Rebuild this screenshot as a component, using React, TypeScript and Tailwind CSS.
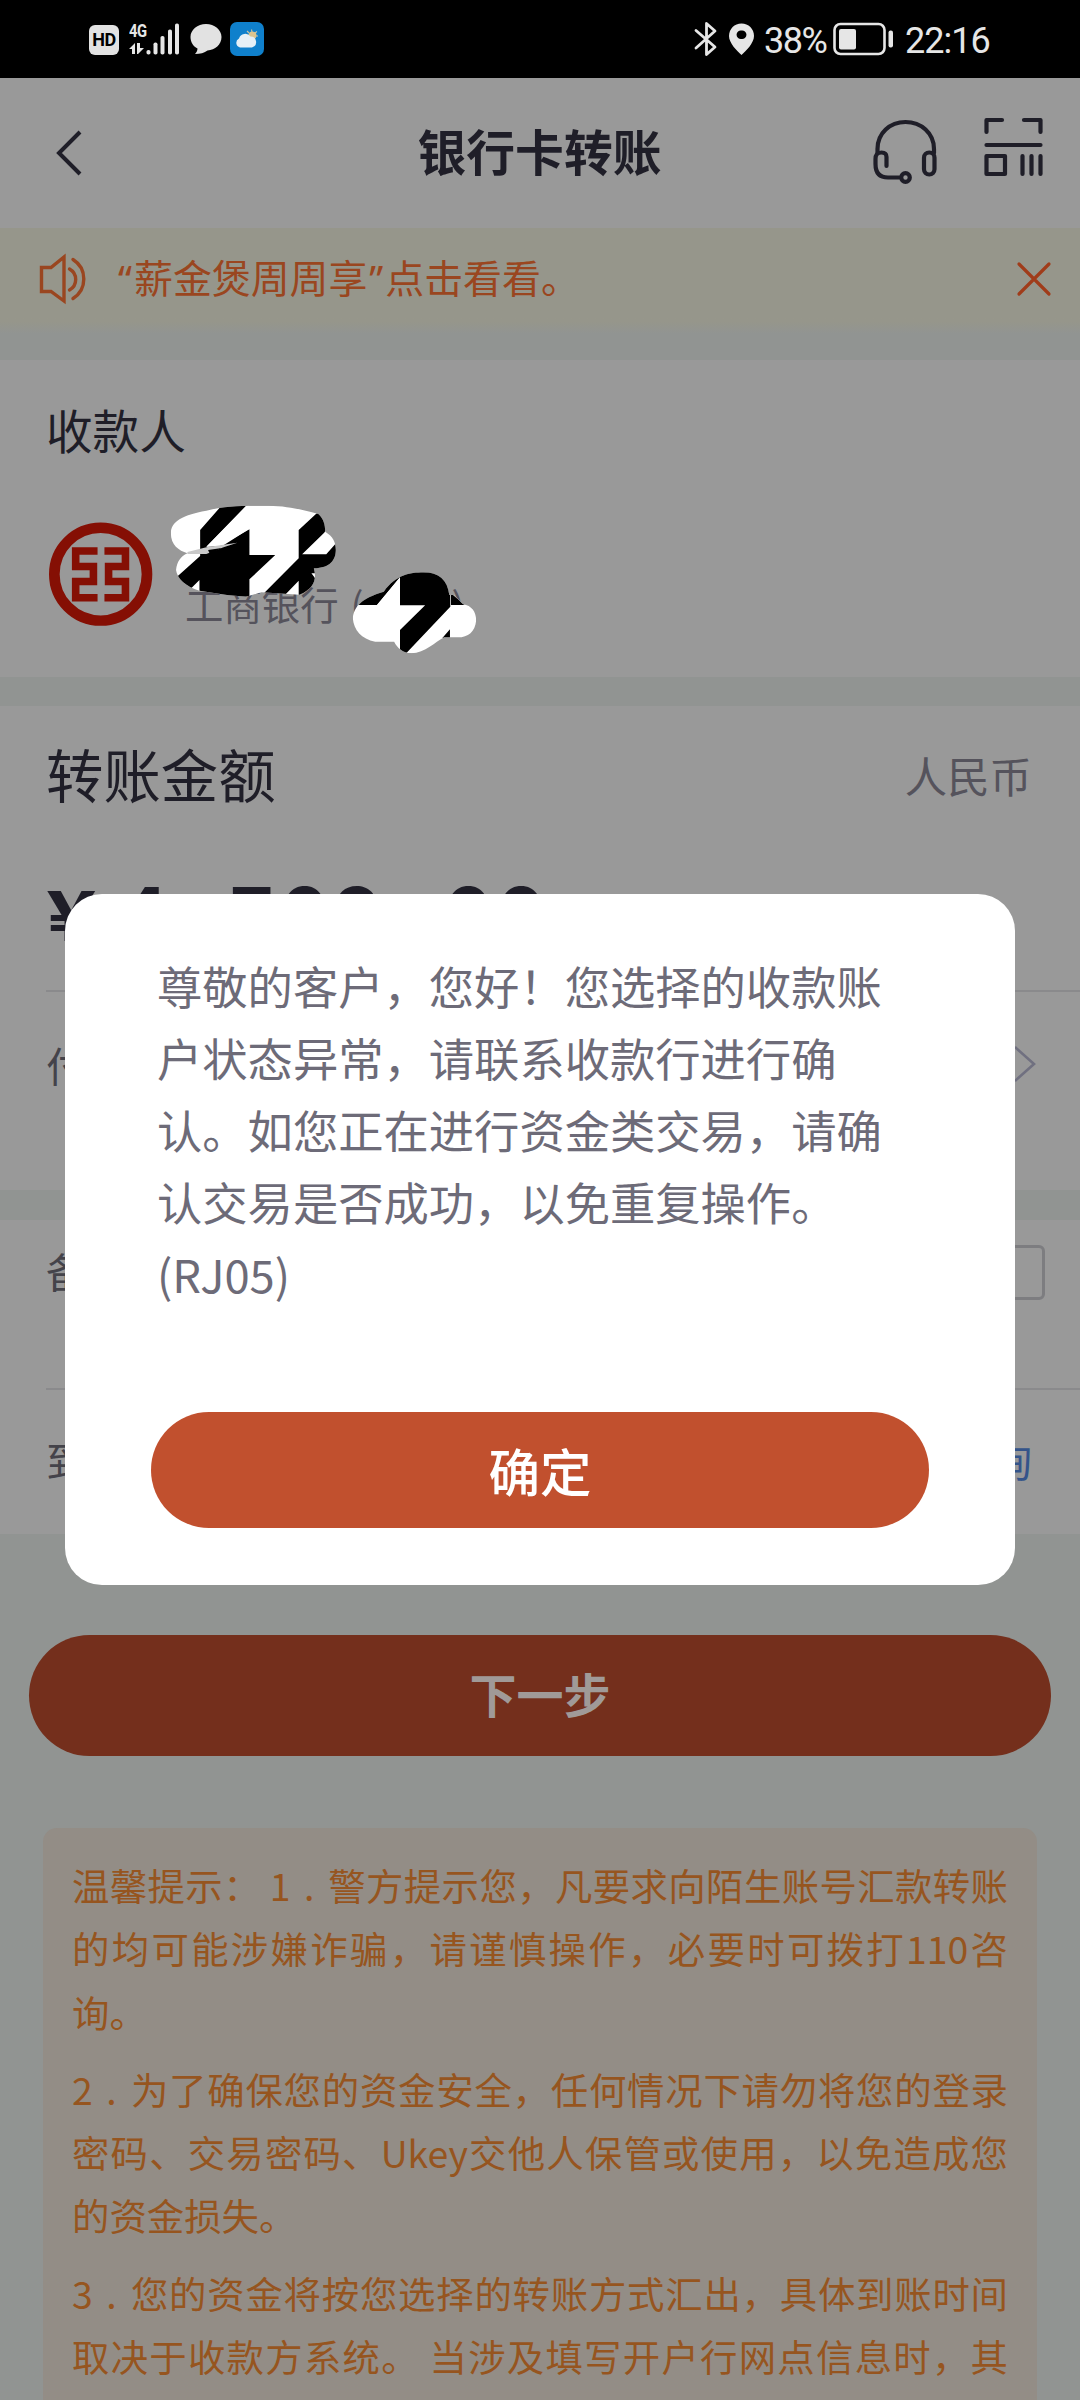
import type { ReactNode } from "react";

const MESSAGE = [
  "尊敬的客户，您好！您选择的收款账",
  "户状态异常，请联系收款行进行确",
  "认。如您正在进行资金类交易，请确",
  "认交易是否成功，以免重复操作。",
  "(RJ05)",
];

export default function App() {
  return (
    <div className="relative w-[1080px] h-[2400px] overflow-hidden bg-[#919492] font-['Noto_Sans_CJK_SC',sans-serif] text-[#1f1e28]">
      <StatusBar />
      <Header />
      <Notice />
      <Payee />
      <Amount />
      <Remark />

      <div className="mt-[101px] ml-[29px] w-[1022px] h-[121px] rounded-full bg-[#742f1c] flex items-center justify-center">
        <span className="text-[47px] leading-none font-bold text-[#a09a98] -mt-[6px]">下一步</span>
      </div>

      <Tips />
      <Dialog />
    </div>
  );
}

function StatusBar() {
  return (
    <div className="h-[78px] bg-black flex items-center justify-between pl-[89px] pr-[89px] text-[#e6e6e6]">
      <div className="flex items-center">
        <div className="mt-[2px] w-[30px] h-[30px] rounded-[6px] bg-[#e2e2e2] text-black flex items-center justify-center font-['Roboto',sans-serif] font-bold text-[18px] leading-none tracking-[-0.5px]">
          HD
        </div>
        <div className="ml-[10px] w-[52px] h-[34px] relative">
          <span className="absolute left-0 top-[1px] font-['Roboto',sans-serif] font-bold text-[18px] leading-[15px] tracking-[-0.5px] scale-x-[0.82] origin-left">
            4G
          </span>
          <svg className="absolute left-0 top-0" width="52" height="34" viewBox="0 0 52 34" fill="#e6e6e6">
            <path d="M0 27 L6 21 V32 H3 V27 Z M8 21 H11 V26 H15 L9 32 H8 Z" />
            <rect x="17.5" y="28" width="4" height="4.5" rx="1.8" />
            <rect x="24.5" y="20.5" width="4" height="12" rx="1.8" />
            <rect x="31.5" y="14" width="4" height="18.5" rx="1.8" />
            <rect x="39" y="7.5" width="4" height="25" rx="1.8" />
            <rect x="46" y="1.5" width="4" height="31" rx="1.8" />
          </svg>
        </div>
        <svg className="ml-[9px]" width="32" height="32" viewBox="0 0 32 32" fill="#e2e2e2">
          <path d="M16 1 C24.500 1 31.500 6.800 31.500 14 C31.500 21.500 25 27 17.500 27.500 C14.500 30 10 31 5 31 C6.500 29.500 7.500 27.500 7.500 25.500 C3 23.200 0.500 19 0.500 14 C0.500 6.800 7.500 1 16 1 Z" />
        </svg>
        <svg className="ml-[8px]" width="34" height="34" viewBox="0 0 34 34">
          <rect width="34" height="34" rx="7" fill="#0f80cc" />
          <path d="M17 9 L19 11 M21.500 7.500 L22 10 M27 9.500 L25 11 M28 14 L25.500 14" stroke="#c9c3a5" strokeWidth="1.200" />
          <circle cx="22.500" cy="13.500" r="4" fill="#dcc48e" />
          <path d="M10 25.500 A4.800 4.800 0 0 1 9 16.500 A6.500 6.500 0 0 1 20.500 14.500 A5.600 5.600 0 0 1 22 25.500 Z" fill="#e6f0f7" />
        </svg>
      </div>

      <div className="flex items-center font-['Roboto',sans-serif]">
        <svg width="24" height="36" viewBox="0 0 24 36" fill="none" stroke="#e6e6e6" strokeWidth="2.800" strokeLinejoin="round" strokeLinecap="round">
          <path d="M2 9.500 L21 26 L12.500 33.500 V2.500 L21 10 L2 27" />
        </svg>
        <svg className="ml-[10px]" width="27" height="34" viewBox="0 0 27 34">
          <path
            d="M13.500 1.500 C20.500 1.500 26 6.800 26 14 C26 21 18 29 13.500 33 C9 29 1 21 1 14 C1 6.800 6.500 1.500 13.500 1.500 Z M13.500 8.500 A4.300 4.300 0 1 0 13.500 17 A4.300 4.300 0 1 0 13.500 8.500 Z"
            fill="#e6e6e6"
            fillRule="evenodd"
          />
        </svg>
        <span className="ml-[9px] w-[66px] text-[36px] leading-none mt-[3px] tracking-[-1.5px] whitespace-nowrap">38%</span>
        <svg className="ml-[3px]" width="61" height="34" viewBox="0 0 61 34">
          <rect x="1.500" y="2" width="50" height="30" rx="6" fill="none" stroke="#e6e6e6" strokeWidth="2.600" />
          <rect x="6" y="7" width="17" height="20.500" rx="2" fill="#e6e6e6" />
          <rect x="55.500" y="8.500" width="4.500" height="17" rx="2" fill="#e6e6e6" />
        </svg>
        <span className="ml-[11px] w-[86px] text-[36px] leading-none mt-[3px] tracking-[-1px] whitespace-nowrap">22:16</span>
      </div>
    </div>
  );
}

function Header() {
  return (
    <div className="relative h-[150px] bg-[#999999] flex items-center justify-center">
      <svg className="absolute left-[54px] top-[50px]" width="32" height="50" viewBox="0 0 32 50" fill="none" stroke="#1f1e28" strokeWidth="4">
        <path d="M26 4 L5 25 L26 46" />
      </svg>
      <h1 className="text-[48.8px] leading-none font-bold -mt-[6px] -ml-[1px]">银行卡转账</h1>
      <div className="absolute left-[871px] top-[38px] flex">
        <svg width="70" height="72" viewBox="0 0 70 72" fill="none" stroke="#1f1e28" strokeWidth="4.200" strokeLinecap="round" strokeLinejoin="round">
          <path d="M6.500 37 V33 C6.500 17 19 6 34.500 6 C50 6 63 17 63 33 V37" />
          <path d="M15.500 50 V41 C15.500 37.500 13.500 36.500 10.500 36.500 C6 36.500 4.500 39 4.500 43 V48 C4.500 57 9 61.500 17 61.500 H28" />
          <rect x="53" y="36.500" width="10.500" height="22" rx="5.200" />
          <circle cx="34.500" cy="61.500" r="4.300" />
        </svg>
        <svg className="ml-[41px]" width="64" height="64" viewBox="0 0 64 64" fill="none" stroke="#1f1e28" strokeWidth="4.200" strokeLinecap="round" strokeLinejoin="round">
          <path d="M4.500 16 V4 H20 M42 4 H58.500 V16 M4.500 29 H58.500" />
          <rect x="4.500" y="40" width="18.500" height="18" />
          <path d="M40.500 40 V58 M49.500 40 V58 M58.500 40 V58" />
        </svg>
      </div>
    </div>
  );
}

function Notice() {
  return (
    <div className="h-[106px] bg-linear-to-b from-[#96968b] from-88% to-[#919492] flex items-start pt-[20px] pl-[38px] text-[#9a4620]">
      <svg className="mt-[4px]" width="52" height="54" viewBox="0 0 52 54" fill="none" stroke="#9a4620" strokeWidth="3.400" strokeLinecap="round">
        <path d="M3.500 15.500 H13 L26 5 V49 L13 39.500 H3.500 Z" />
        <path d="M31.500 17 A12 12 0 0 1 31.500 38 M35 7.500 A23 23 0 0 1 35 46.500" />
      </svg>
      <p className="ml-[26px] text-[38.9px] leading-[56px] whitespace-nowrap">
        <Quote>“</Quote>薪金煲周周享<Quote>”</Quote>点击看看。
      </p>
      <svg className="ml-auto mr-[28px] mt-[12px]" width="36" height="38" viewBox="0 0 36 38" stroke="#a03c1a" strokeWidth="3.200" strokeLinecap="round">
        <path d="M3 4 L33 34 M33 4 L3 34" />
      </svg>
    </div>
  );
}

function Quote({ children }: { children: ReactNode }) {
  return <span className="inline-block w-[18px] text-center font-['Noto_Sans',sans-serif]">{children}</span>;
}

function Payee() {
  return (
    <div className="relative mt-[26px] h-[317px] bg-[#999999] pl-[46px] pt-[44px]">
      <h2 className="text-[46.6px] leading-[50px]">收款人</h2>
      <div className="flex mt-[68px]">
        <svg className="ml-[3px]" width="104" height="105" viewBox="143 547 302 312" preserveAspectRatio="none" fill="none" stroke="#850f04">
          <ellipse cx="293" cy="702" rx="134.500" ry="138" strokeWidth="31" />
          <path d="M284 633 H220.500 V679 H272 V724 H220.500 V772 H284" strokeWidth="22" />
          <path d="M304 633 H365 V679 H316 V724 H365 V772 H304" strokeWidth="22" />
        </svg>
        <div className="ml-[32px] mt-[57px] flex text-[38.4px] leading-[48px] text-[#55535c]">
          <span>工商银行</span>
          <span className="ml-[12px]">(</span>
          <span className="ml-[88px]">)</span>
        </div>
      </div>
      <Scribbles />
    </div>
  );
}

// hand-drawn marker blobs hiding the payee's name and card tail
function Scribbles() {
  return (
    <svg className="absolute left-[165px] top-[140px]" width="317" height="160" viewBox="480 480 920 480" preserveAspectRatio="none">
      <clipPath id="name-blob">
        <path d="M497 580 C497 545 530 525 600 512 C650 498 700 497 780 497 C840 498 880 510 925 522 C940 535 945 555 945 575 C968 590 975 605 976 630 C975 660 960 684 912 685 C920 715 915 745 870 764 L760 757 L715 770 L660 765 L580 752 C540 740 515 715 512 690 C515 665 525 650 545 640 C520 632 497 615 497 580 Z" />
      </clipPath>
      <clipPath id="card-blob">
        <path d="M1025 835 C1028 800 1050 775 1115 755 C1150 705 1190 697 1230 697 C1275 697 1300 720 1305 765 L1318 765 L1345 793 C1370 797 1383 815 1383 842 C1380 875 1360 892 1330 892 H1290 C1265 905 1235 940 1195 940 C1170 938 1155 925 1145 905 H1090 C1050 898 1028 870 1025 835 Z" />
      </clipPath>
      <g clipPath="url(#name-blob)">
        <rect x="480" y="480" width="520" height="300" fill="#fff" />
        <path d="M650 490 H722 L600 620 L640 618 L725 568 V645 H800 L725 718 V780 H580 V720 L556 745 L510 715 L582 648 V570 Z" />
        <path d="M600 620 L725 490 V566 L650 616 Z" fill="#fff" />
        <path d="M600 622 L690 608 L650 622 L600 642 H545 V636 Z" fill="#c9c9c9" />
        <path d="M605 630 L645 624 L610 642 Z" />
        <path d="M922 518 L960 550 L942 578 L878 643 H948 L980 605 V700 H905 L930 735 L868 775 V722 L828 765 H762 L868 655 V570 Z" />
      </g>
      <g clipPath="url(#card-blob)">
        <rect x="1020" y="690" width="370" height="255" fill="#fff" />
        <path d="M1162 690 H1308 V800 L1180 940 H1162 V870 L1235 796 H1162 V712 L1095 795 H1035 L1060 760 Z" />
        <path d="M1162 712 V796 H1095 Z" fill="#fff" />
        <path d="M1285 894 L1307 868 V894 Z M1310 760 L1350 795 H1310 Z" />
      </g>
    </svg>
  );
}

function Amount() {
  return (
    <div className="mt-[29px] h-[484px] bg-[#999999] pl-[46px]">
      <div className="flex items-center justify-between h-[136px] pr-[48px]">
        <h2 className="text-[57.4px] leading-none">转账金额</h2>
        <span className="text-[42.4px] leading-none text-[#55535c] mt-[3px]">人民币</span>
      </div>
      <div className="h-[148px] pt-[27px] flex items-baseline font-['Inter',sans-serif] font-bold tabular-nums leading-[90px] whitespace-nowrap">
        <span className="text-[69px] w-[74px] scale-x-[1.28] origin-left">¥</span>
        <span className="text-[74px] tracking-[5px]">
          4<span className="inline-block w-[55px] text-center">,</span>709
          <span className="inline-block w-[58px] text-center">.</span>00
        </span>
      </div>
      <div className="h-[149px] border-t-2 border-[#8a8a8c] flex items-center justify-between pr-[43px] pb-[3px] text-[41px] leading-none text-[#44434a]">
        <span>付款卡</span>
        <svg width="24" height="40" viewBox="0 0 24 40" fill="none" stroke="#707080" strokeWidth="2.600">
          <path d="M2 3 L21 20 L2 37" />
        </svg>
      </div>
    </div>
  );
}

function Remark() {
  return (
    <div className="mt-[30px] h-[314px] bg-[#999999] pl-[46px] text-[41px] leading-none text-[#44434a]">
      <div className="h-[168px] flex items-start justify-between pr-[35px] pt-[25px]">
        <span className="mt-[5px]">备注</span>
        <div className="w-[760px] h-[55px] rounded-md border-3 border-[#7d7d80]" />
      </div>
      <div className="h-[146px] border-t-2 border-[#8a8a8c] flex items-start justify-between pt-[49px] pr-[48px]">
        <span>到账时间</span>
        <span className="text-[#34548a]">查询</span>
      </div>
    </div>
  );
}

function TipLine({ children }: { children: ReactNode }) {
  return <div className="whitespace-nowrap text-justify [text-align-last:justify]">{children}</div>;
}

function Dot() {
  return <span className="inline-block w-[1em] text-center [text-align-last:center]">.</span>;
}

function Tips() {
  return (
    <div className="mt-[72px] ml-[43px] w-[994px] h-[640px] rounded-[14px] bg-[#938d86] pt-[26px] pl-[29px] pr-[29px] text-[37.4px] leading-[63.3px] text-[#96551f]">
      <TipLine>温馨提示： 1<Dot />警方提示您，凡要求向陌生账号汇款转账</TipLine>
      <TipLine>的均可能涉嫌诈骗，请谨慎操作，必要时可拨打110咨</TipLine>
      <div>询。</div>
      <div className="mt-[14px]">
        <TipLine>2<Dot />为了确保您的资金安全，任何情况下请勿将您的登录</TipLine>
        <TipLine>密码、交易密码、Ukey交他人保管或使用，以免造成您</TipLine>
        <div>的资金损失。</div>
      </div>
      <div className="mt-[14px]">
        <TipLine>3<Dot />您的资金将按您选择的转账方式汇出，具体到账时间</TipLine>
        <TipLine>取决于收款方系统。 当涉及填写开户行网点信息时，其</TipLine>
      </div>
    </div>
  );
}

function Dialog() {
  return (
    <div className="absolute left-[65px] top-[894px] w-[950px] h-[691px] rounded-[37px] bg-white pt-[55px]">
      <div className="ml-[92px] text-[45.3px] leading-[72.1px] text-[#6d6b78] whitespace-nowrap">
        {MESSAGE.map((line) => (
          <p key={line}>{line}</p>
        ))}
      </div>
      <button className="absolute left-[86px] top-[518px] w-[778px] h-[116px] rounded-full bg-[#c1502e] text-white text-[51.5px] leading-none font-medium flex items-center justify-center">
        确定
      </button>
    </div>
  );
}
